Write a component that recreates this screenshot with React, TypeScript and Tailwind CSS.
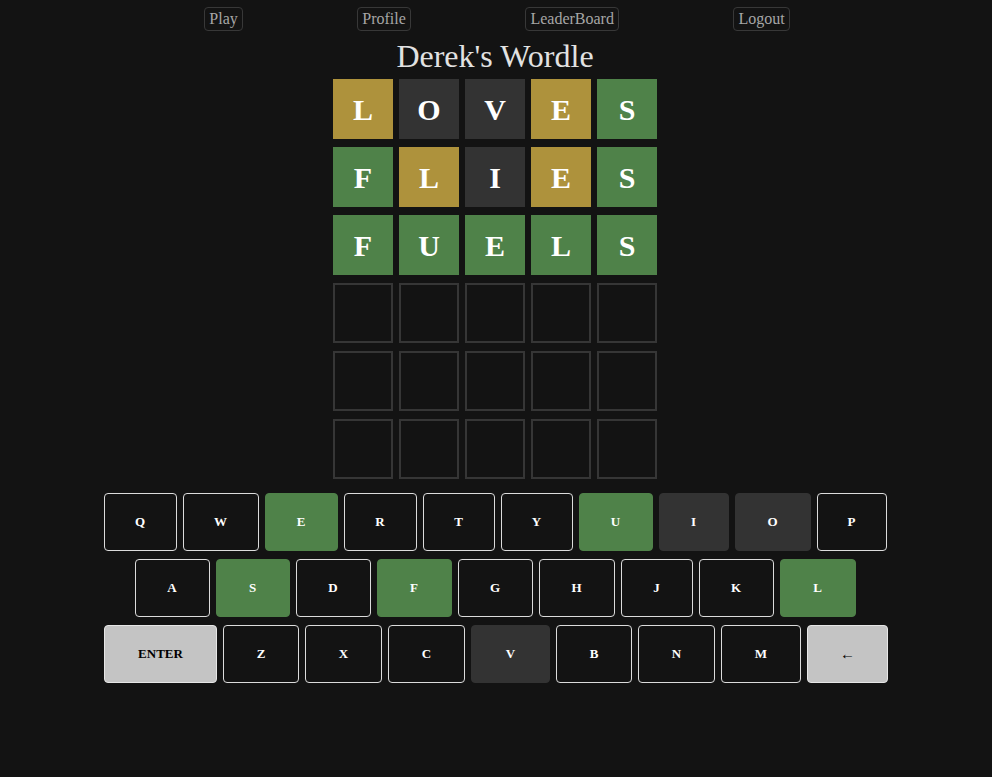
import React from 'react';

type Status = 'correct' | 'present' | 'absent' | 'empty';

const tileColors: Record<Status, string> = {
  correct: 'bg-[#4f8249] text-white',
  present: 'bg-[#ae923c] text-white',
  absent: 'bg-[#333333] text-white',
  empty: 'border-2 border-[#363636] bg-[#131313]',
};

const guesses: Array<Array<[string, Status]>> = [
  [['L', 'present'], ['O', 'absent'], ['V', 'absent'], ['E', 'present'], ['S', 'correct']],
  [['F', 'correct'], ['L', 'present'], ['I', 'absent'], ['E', 'present'], ['S', 'correct']],
  [['F', 'correct'], ['U', 'correct'], ['E', 'correct'], ['L', 'correct'], ['S', 'correct']],
];

type KeyDef = { label: string; w: string; state?: 'correct' | 'absent' | 'action' };

const keyRows: KeyDef[][] = [
  [
    { label: 'Q', w: 'w-[73px]' },
    { label: 'W', w: 'w-[76px]' },
    { label: 'E', w: 'w-[73px]', state: 'correct' },
    { label: 'R', w: 'w-[73px]' },
    { label: 'T', w: 'w-[72px]' },
    { label: 'Y', w: 'w-[72px]' },
    { label: 'U', w: 'w-[74px]', state: 'correct' },
    { label: 'I', w: 'w-[70px]', state: 'absent' },
    { label: 'O', w: 'w-[76px]', state: 'absent' },
    { label: 'P', w: 'w-[70px]' },
  ],
  [
    { label: 'A', w: 'w-[75px]' },
    { label: 'S', w: 'w-[74px]', state: 'correct' },
    { label: 'D', w: 'w-[75px]' },
    { label: 'F', w: 'w-[75px]', state: 'correct' },
    { label: 'G', w: 'w-[75px]' },
    { label: 'H', w: 'w-[76px]' },
    { label: 'J', w: 'w-[72px]' },
    { label: 'K', w: 'w-[75px]' },
    { label: 'L', w: 'w-[76px]', state: 'correct' },
  ],
  [
    { label: 'ENTER', w: 'w-[113px]', state: 'action' },
    { label: 'Z', w: 'w-[76px]' },
    { label: 'X', w: 'w-[77px]' },
    { label: 'C', w: 'w-[77px]' },
    { label: 'V', w: 'w-[79px]', state: 'absent' },
    { label: 'B', w: 'w-[76px]' },
    { label: 'N', w: 'w-[77px]' },
    { label: 'M', w: 'w-[80px]' },
    { label: '←', w: 'w-[81px]', state: 'action' },
  ],
];

const rowPad = ['', '', 'pl-[2px]'];

const keyStyle = (state?: KeyDef['state']) => {
  switch (state) {
    case 'correct':
      return 'bg-[#4f8249] border-[#4f8249] text-white';
    case 'absent':
      return 'bg-[#333333] border-[#333333] text-white';
    case 'action':
      return 'bg-[#c4c4c4] border-[#e6e6e6] text-black';
    default:
      return 'bg-[#131313] border-[#dcdcdc] text-white';
  }
};

const navItems = ['Play', 'Profile', 'LeaderBoard', 'Logout'];

export default function App() {
  const rows = [...guesses];
  while (rows.length < 6) {
    rows.push(Array.from({ length: 5 }, () => ['', 'empty'] as [string, Status]));
  }

  return (
    <div className="min-h-screen bg-[#131313] pr-[2px] font-['Liberation_Serif','Times_New_Roman',serif]">
      <nav className="mx-auto flex w-[704px] justify-around pt-[7px] pl-[4px]">
        {navItems.map((item) => (
          <button
            key={item}
            className="flex h-6 items-center rounded-[4px] border border-[#383838] px-[4px] text-[16px] text-[#a6a6a6]"
          >
            {item}
          </button>
        ))}
      </nav>

      <h1 className="mt-[7px] text-center text-[32px] leading-[37px] text-[#e2e2e2]">Derek's Wordle</h1>

      <div className="mx-auto mt-[4px] grid w-[324px] grid-cols-5 gap-x-[6px] gap-y-[8px]">
        {rows.map((row, r) =>
          row.map(([letter, status], c) => (
            <div
              key={`${r}-${c}`}
              className={`flex h-[60px] w-[60px] items-center justify-center text-[30px] font-bold ${tileColors[status]}`}
            >
              {letter}
            </div>
          ))
        )}
      </div>

      <div className="mt-[14px] flex flex-col gap-[8px]">
        {keyRows.map((row, i) => (
          <div key={i} className={`flex justify-center gap-[6px] ${rowPad[i]}`}>
            {row.map((k) => (
              <button
                key={k.label}
                className={`flex h-[58px] items-center justify-center rounded-[4px] border text-[13px] font-bold ${k.w} ${keyStyle(k.state)}`}
              >
                {k.label === '←' ? <span className="text-[15px]">←</span> : k.label}
              </button>
            ))}
          </div>
        ))}
      </div>
    </div>
  );
}
